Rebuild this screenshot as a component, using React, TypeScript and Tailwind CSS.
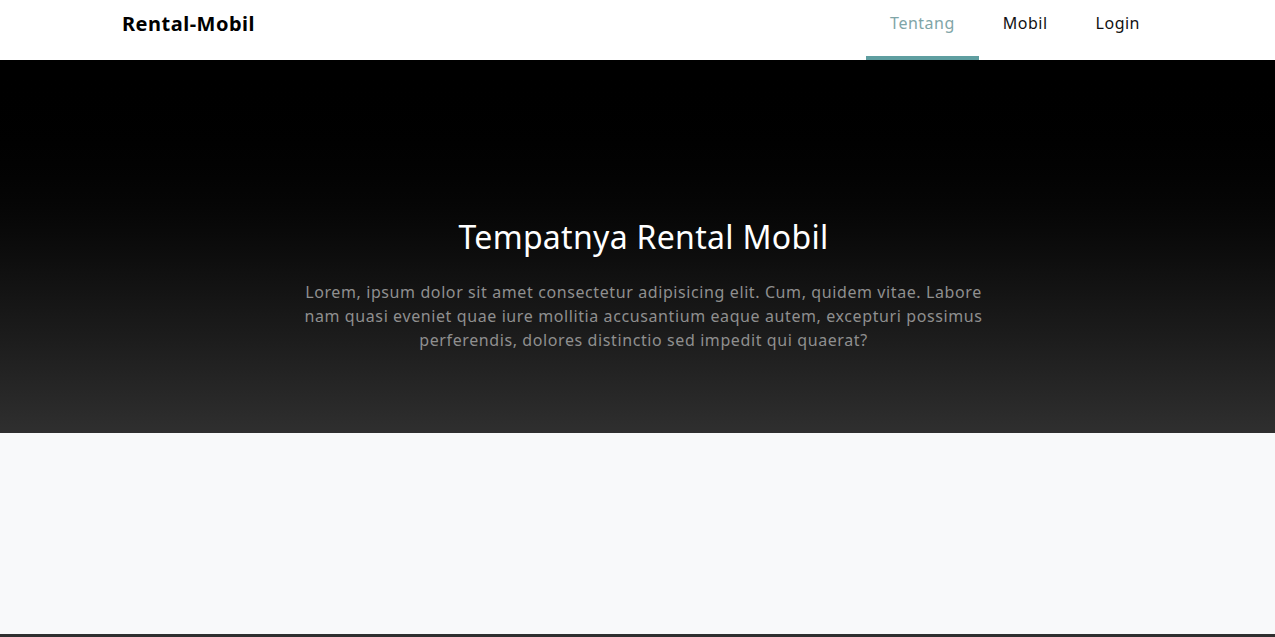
// Halaman depan Rental-Mobil: navbar, hero bergradasi, area konten kosong

const navItems = [
  { label: 'Tentang', active: true },
  { label: 'Mobil', active: false },
  { label: 'Login', active: false },
];

export default function App() {
  return (
    <div className="min-h-[637px] bg-[#f8f9fa] font-['Noto_Sans',sans-serif] flex flex-col">
      <nav className="h-[60px] bg-white flex items-stretch justify-between pl-[110px] pr-[111px]">
        <a className="px-3 pt-[9px] text-[20px] font-bold text-black tracking-[0.5px]">Rental-Mobil</a>
        <ul className="flex">
          {navItems.map((item) => (
            <li key={item.label}>
              <a
                className={`h-full flex items-start pt-[11px] px-6 text-base tracking-[0.5px] border-b-4 ${
                  item.active ? 'text-[#7fa5a7] border-[#5f9ea0]' : 'text-[#111] border-transparent'
                }`}
              >
                {item.label}
              </a>
            </li>
          ))}
        </ul>
      </nav>

      <header className="h-[373px] bg-gradient-to-b from-black to-[#2f2f2f] flex flex-col items-center pt-[155px] pl-3 text-center">
        <h1 className="text-[32px] leading-[44px] text-white tracking-[0.3px]">Tempatnya Rental Mobil</h1>
        <p className="mt-[21px] max-w-[700px] text-base leading-6 text-[#8f8f8f] tracking-[0.6px]">
          Lorem, ipsum dolor sit amet consectetur adipisicing elit. Cum, quidem vitae. Labore nam quasi eveniet quae
          iure mollitia accusantium eaque autem, excepturi possimus perferendis, dolores distinctio sed impedit qui
          quaerat?
        </p>
      </header>

      <main className="h-[201px]" />

      <footer className="h-[3px] bg-[#2f2f2f]" />
    </div>
  );
}
